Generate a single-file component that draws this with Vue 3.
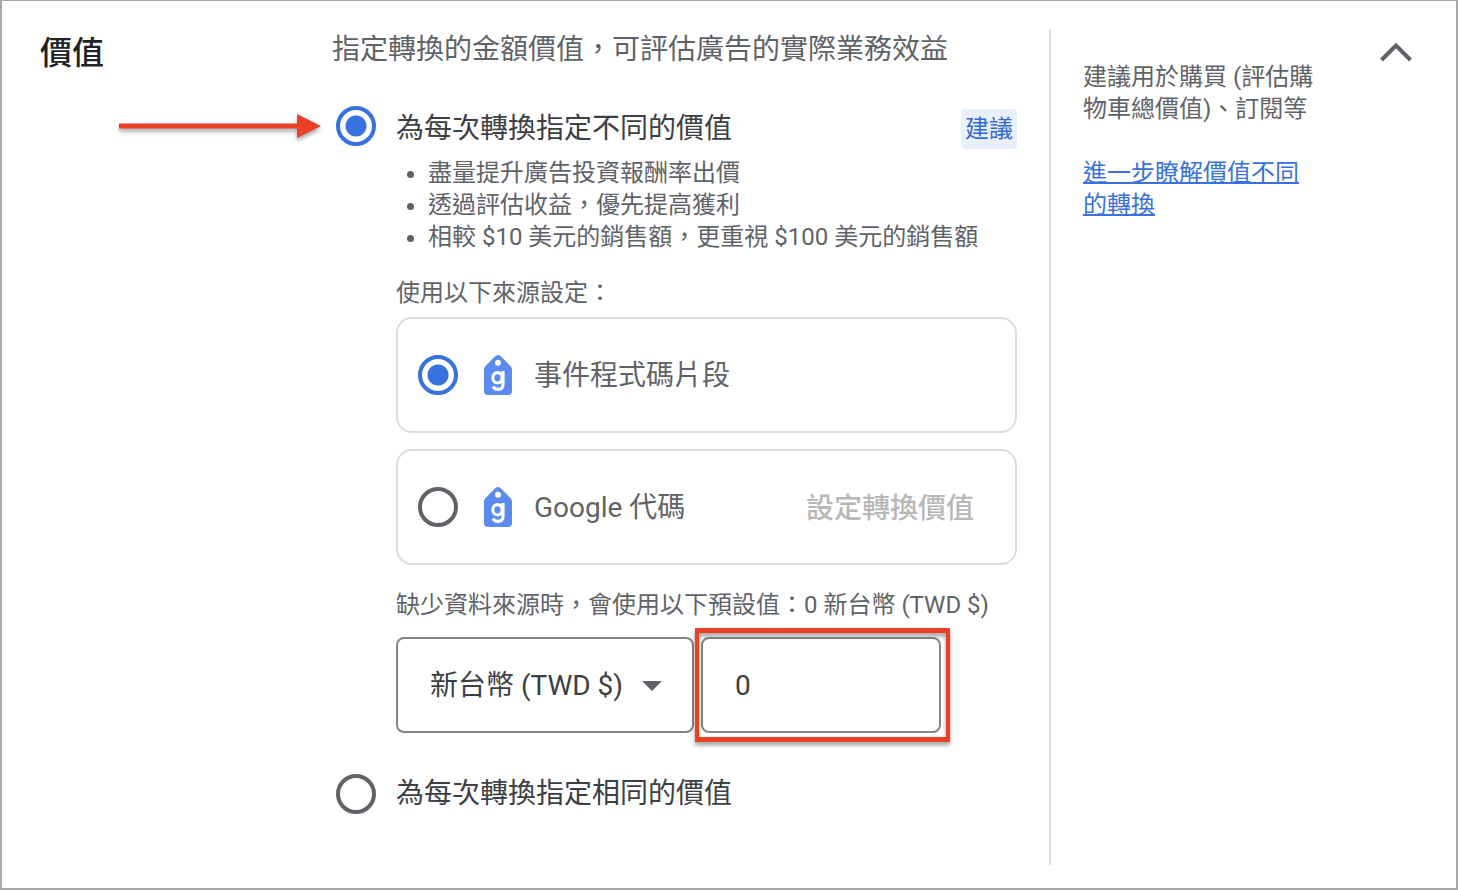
<script setup>
import { ref } from 'vue'

const valueMode = ref('different')
const source = ref('snippet')
const currency = ref('TWD')
const amount = ref('0')

const benefits = [
  '盡量提升廣告投資報酬率出價',
  '透過評估收益，優先提高獲利',
  '相較 $10 美元的銷售額，更重視 $100 美元的銷售額',
]

const sources = [
  { id: 'snippet', label: '事件程式碼片段' },
  { id: 'gtag', label: 'Google 代碼', action: '設定轉換價值' },
]
</script>

<template>
  <section class="panel">
    <h2 class="heading">價值</h2>

    <main class="settings">
      <p class="intro">指定轉換的金額價值，可評估廣告的實際業務效益</p>

      <div class="option recommended">
        <svg class="pointer" viewBox="0 0 204 32" aria-hidden="true">
          <path d="M0 13.500H178V4L202 16L178 28V18.500H0Z" fill="#ea4025" />
        </svg>
        <input id="mode-different" v-model="valueMode" class="radio" type="radio" name="mode" value="different" />
        <label class="option-label" for="mode-different">為每次轉換指定不同的價值</label>
        <span class="badge">建議</span>
      </div>

      <div class="details">
        <ul class="benefits">
          <li v-for="item in benefits" :key="item">{{ item }}</li>
        </ul>

        <p class="caption">使用以下來源設定：</p>
        <div class="cards">
          <div v-for="s in sources" :key="s.id" class="card">
            <input :id="s.id" v-model="source" class="radio" type="radio" name="source" :value="s.id" />
            <svg class="tag" viewBox="0 0 28 40" aria-hidden="true">
              <path d="M11.400 1.100Q14 -1 16.600 1.100L26.700 11.200Q28 12.500 28 14.500V36Q28 40 24 40H4Q0 40 0 36V14.500Q0 12.500 1.300 11.200Z" fill="#5b8bf0" />
              <circle cx="14" cy="7.800" r="3" fill="#fff" />
              <ellipse cx="13.500" cy="22.800" rx="4.700" ry="5.200" fill="none" stroke="#fff" stroke-width="3.200" />
              <path d="M19 16V29.500Q19 34.300 14 34.300Q10.500 34.300 9 31.500" fill="none" stroke="#fff" stroke-width="3.200" />
            </svg>
            <label class="card-label" :for="s.id">{{ s.label }}</label>
            <button v-if="s.action" class="card-action" type="button" disabled>{{ s.action }}</button>
          </div>
        </div>

        <p class="caption">缺少資料來源時，會使用以下預設值：0 新台幣 (TWD $)</p>
        <div class="fields">
          <div class="currency">
            <select v-model="currency" class="control" aria-label="幣別">
              <option value="TWD">新台幣 (TWD $)</option>
            </select>
            <svg class="caret" viewBox="0 0 20 10" aria-hidden="true"><path d="M0 0H20L10 10Z" fill="#5f6368" /></svg>
          </div>
          <div class="amount">
            <input v-model="amount" class="control" type="text" aria-label="預設值" />
            <span class="highlight"></span>
          </div>
        </div>
      </div>

      <div class="option">
        <input id="mode-same" v-model="valueMode" class="radio" type="radio" name="mode" value="same" />
        <label class="option-label" for="mode-same">為每次轉換指定相同的價值</label>
      </div>
    </main>

    <aside class="help">
      <div class="help-text">
        <p>建議用於購買 (評估購物車總價值)、訂閱等</p>
        <a href="#">進一步瞭解價值不同的轉換</a>
      </div>
      <button class="collapse" type="button" aria-label="收合">
        <svg viewBox="0 0 32 20" aria-hidden="true"><path d="M1.500 18L16 3.500L30.500 18" fill="none" stroke="#5f6368" stroke-width="4" /></svg>
      </button>
    </aside>
  </section>
</template>

<style>
body {
  margin: 0;
  background: #fff;
}
</style>

<style scoped>
* {
  box-sizing: border-box;
}

.panel {
  display: grid;
  grid-template-columns: 292px minmax(0, 1fr) 363px;
  min-height: 100vh;
  padding: 28px 44px 23px 38px;
  border: 2px solid #a9a9a9;
  border-top-width: 1px;
  font-family: Roboto, "Noto Sans CJK TC", sans-serif;
  font-size: 24px;
  line-height: 32px;
  color: #5f6368;
}

h2, p, ul {
  margin: 0;
}

.heading {
  font-size: 32px;
  font-weight: 500;
  line-height: 48px;
  color: #202124;
}

.settings {
  padding-right: 32px;
}

.intro {
  font-size: 28px;
  line-height: 42px;
}

.option {
  position: relative;
  display: flex;
  align-items: center;
  padding-left: 4px;
  margin-top: 41px;
}

.recommended {
  align-items: flex-end;
  height: 43px;
  margin-top: 35px;
}

.recommended .radio {
  align-self: flex-start;
}

.option-label {
  flex: 1;
  margin-left: 20px;
  font-size: 28px;
  line-height: 40px;
  color: #3c4043;
}

.pointer {
  position: absolute;
  right: calc(100% + 9px);
  top: 4px;
  width: 204px;
  height: 32px;
  overflow: visible;
  filter: drop-shadow(0 3px 2px rgba(0, 0, 0, 0.35));
}

.radio {
  appearance: none;
  flex: none;
  width: 40px;
  height: 40px;
  margin: 0;
  border: 4px solid #5f6368;
  border-radius: 50%;
}

.radio:checked {
  border-color: #3871e0;
  background: radial-gradient(circle, #3871e0 10px, transparent 11px);
}

.badge {
  padding: 4px;
  border-radius: 4px;
  background: #e8f0fe;
  color: #3367d6;
}

.details {
  padding-left: 64px;
}

.benefits {
  padding: 0 0 0 32px;
  margin-top: 8px;
}

.caption {
  margin-top: 24px;
}

.cards {
  display: grid;
  gap: 16px;
  margin-top: 8px;
}

.card {
  display: flex;
  align-items: center;
  height: 116px;
  padding: 0 41px 0 20px;
  border: 2px solid #dadce0;
  border-radius: 16px;
}

.tag {
  width: 28px;
  height: 40px;
  margin: 0 22px 0 26px;
}

.card-label {
  flex: 1;
  padding-top: 2px;
  font-size: 28px;
  line-height: 40px;
}

.card-action {
  padding: 4px 0 0;
  border: 0;
  background: none;
  font: inherit;
  font-size: 28px;
  font-weight: 500;
  line-height: 40px;
  color: #b8b8b8;
}

.fields {
  display: flex;
  gap: 7px;
  margin-top: 16px;
}

.currency,
.amount {
  position: relative;
}

.currency {
  width: 298px;
}

.amount {
  width: 240px;
}

.control {
  appearance: none;
  display: block;
  width: 100%;
  height: 96px;
  padding: 0 32px;
  border: 2px solid #80868b;
  border-radius: 8px;
  background: #fff;
  font: inherit;
  font-size: 28px;
  color: #3c4043;
}

select.control {
  padding-top: 2px;
}

.caret {
  position: absolute;
  top: 44px;
  right: 32px;
  width: 20px;
  height: 10px;
  pointer-events: none;
}

.highlight {
  position: absolute;
  inset: -9px -9px -9px -6px;
  border: solid #ea4025;
  border-width: 5px 4px;
  filter: drop-shadow(0 3px 2px rgba(0, 0, 0, 0.4));
  pointer-events: none;
}

.help {
  display: flex;
  align-items: flex-start;
  gap: 60px;
  padding-left: 32px;
  border-left: 2px solid #dadce0;
}

.help-text {
  flex: 1;
  padding-top: 32px;
}

.help-text a {
  display: block;
  margin-top: 32px;
  color: #3871e0;
  text-decoration-thickness: 2px;
}

.collapse {
  flex: none;
  width: 32px;
  padding: 0;
  margin-top: 13px;
  border: 0;
  background: none;
}

.collapse svg {
  display: block;
  width: 32px;
  height: 20px;
}
</style>
